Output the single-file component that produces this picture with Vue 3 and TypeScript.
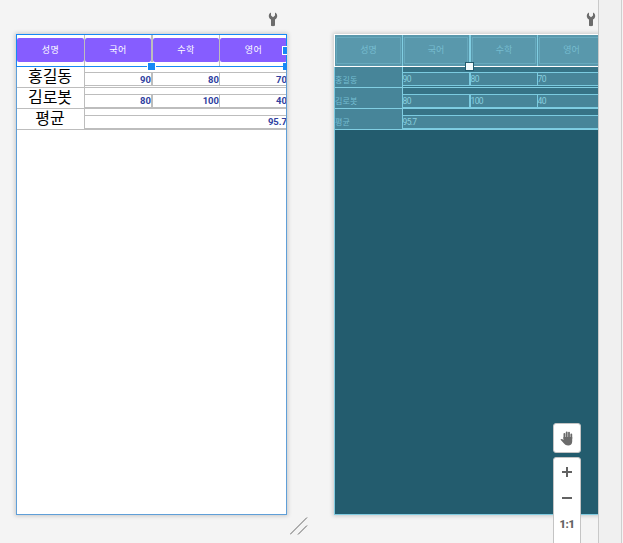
<script setup lang="ts">
interface ScoreRow { label: string; values: string[] }

const subjects: string[] = ['성명', '국어', '수학', '영어']
const rows: ScoreRow[] = [
  { label: '홍길동', values: ['90', '80', '70'] },
  { label: '김로봇', values: ['80', '100', '40'] },
  { label: '평균', values: ['95.7'] },
]
const surfaces: string[] = ['design', 'blueprint']
</script>

<template>
  <div class="editor">
    <main class="canvas">
      <section v-for="kind in surfaces" :key="kind" class="surface" :class="kind">
        <div class="tools">
          <svg class="wrench" viewBox="0 0 10 15" width="10" height="15">
            <path d="M3 .4v3.200L5 5.200l2-1.600V.4C8.700 1.200 9.300 2.600 9.200 4.200 9.100 5.800 8.200 6.800 7 7.400v5.600c0 .8-.8 1.200-2 1.200s-2-.4-2-1.200V7.400C1.800 6.800.9 5.800.8 4.200.7 2.600 1.300 1.200 3 .4z" fill="#6c6c6c" />
          </svg>
        </div>
        <div class="phone">
          <div class="row header">
            <div v-for="subject in subjects" :key="subject" class="head-cell">
              <span class="button">{{ subject }}</span>
            </div>
          </div>
          <div v-for="(row, i) in rows" :key="row.label" class="row body" :class="'r' + i">
            <div class="name">{{ row.label }}</div>
            <div v-for="(value, j) in row.values" :key="j" class="value">{{ value }}</div>
          </div>
          <div class="frame"></div>
          <div class="selection"></div>
          <i class="handle bottom"></i>
          <i class="handle corner"></i>
          <i class="handle side"></i>
        </div>
      </section>
      <svg class="grip" viewBox="0 0 18 18" width="18" height="18">
        <path d="M0 17.500L17 .5M8 17.500l9-9" stroke="#666" fill="none" />
      </svg>
      <div class="controls">
        <button class="pan">
          <svg viewBox="0 0 14 15" width="14" height="15">
            <path d="M4.400 7.500V2.800M6.700 7V1.300M9 7V1.600M11.300 7.500V3.300" stroke="#6b6b6b" stroke-width="1.800" stroke-linecap="round" />
            <path d="M3.500 6h8.700v4.500c0 2.500-1.600 4-4 4-2 0-3.200-.8-4.200-2L.4 8.600c.8-1 1.800-.9 3.100.3z" fill="#6b6b6b" />
          </svg>
        </button>
        <div class="zoom">
          <svg viewBox="0 0 10 10" width="10" height="10"><path d="M5 0v10M0 5h10" stroke="#626262" stroke-width="2" /></svg>
          <svg viewBox="0 0 10 10" width="10" height="10"><path d="M0 5h10" stroke="#626262" stroke-width="2" /></svg>
          <span class="ratio">1:1</span>
        </div>
      </div>
    </main>
    <aside class="rail"></aside>
  </div>
</template>

<style>
body { background: #f4f4f4; overflow: hidden; }
</style>

<style scoped>
* { box-sizing: border-box; }
.editor { display: flex; width: 623px; height: 543px; overflow: hidden; background: #f4f4f4; font-family: Roboto, "Noto Sans CJK KR", sans-serif; }
.canvas { position: relative; flex: none; width: 598px; height: 543px; padding-left: 16px; display: flex; gap: 47px; overflow: hidden; }
.rail { flex: none; width: 25px; background: #f0f0f0; border-left: 1px solid #c9c9c9; box-shadow: inset -1px 0 #f4f4f4, inset -2px 0 #cecece; }
.surface { flex: none; width: 271px; }
.tools { height: 34px; padding: 12px 9px 0 0; display: flex; justify-content: flex-end; }
.phone { position: relative; height: 481px; background: #fff; box-shadow: 0 0 4px 1px #c8c8c8; }
.row { display: grid; grid-template-columns: 68px 67px 68px 68px; }
.header { height: 33px; }
.head-cell { padding: 4px 0; border-left: 1px solid #bdbdbd; display: flex; }
.head-cell:nth-child(3) { border-left-width: 2px; }
.button { flex: 1; height: 24px; border-radius: 2px; background: #865dff; color: #fff; font-size: 9px; line-height: 24px; letter-spacing: .4px; text-align: center; }
.body { height: 21px; border-bottom: 1px solid #bdbdbd; }
.name { height: 20px; font-size: 16px; line-height: 20px; color: #000; text-align: center; white-space: nowrap; box-shadow: 1px 0 #bdbdbd; }
.value { margin-top: 5px; height: 14px; border: solid #bdbdbd; border-width: 1px 0 1px 1px; color: #303f9f; font-size: 9.500px; line-height: 13px; letter-spacing: 0; font-weight: 700; text-align: right; white-space: nowrap; }
.r0 .value:nth-child(3), .r1 .value:nth-child(3) { border-left-width: 2px; }
.r1 .value, .r2 .value { margin-top: 6px; line-height: 12px; }
.r2 .value { grid-column: 2 / 5; }
.frame { position: absolute; inset: 0; border: 1px solid #5f9fd8; }
.selection { position: absolute; inset: 0 0 auto; height: 33px; border: 1px solid #1688f5; }
.handle { position: absolute; width: 7px; height: 7px; background: #1688f5; outline: 1px solid #fff; }
.bottom { left: 132px; top: 29px; }
.corner { left: 267px; top: 29px; width: 4px; outline: 0; }
.side { left: 266px; top: 12px; width: 5px; height: 9px; outline: 0; border: 1px solid #fff; border-right: 0; }

.blueprint .phone { background: #235c6e; }
.blueprint .header { background: #5998ac; }
.blueprint .head-cell { padding: 3px 1px; border-color: #81cee2; }
.blueprint .button { height: 27px; border: 1px solid #67a9bd; border-radius: 0; background: transparent; color: #77bdd0; line-height: 25px; letter-spacing: 0; }
.blueprint .body { background: #367386; border-color: #81cee2; }
.blueprint .name { background: #478599; color: #75bdd1; font-size: 8px; letter-spacing: .2px; line-height: 27px; text-align: left; padding-left: 1px; box-shadow: 1px 0 #81cee2; }
.blueprint .value { background: #478599; border-color: #7bcbe0; color: #88cfdf; font-size: 8.500px; line-height: 13px; font-weight: 400; letter-spacing: -.65px; text-align: left; text-indent: -.5px; }
.blueprint .frame { border-color: #81cbe0; }
.blueprint .selection { border-color: #fff; }
.blueprint .bottom { background: #f2fafc; outline-color: #235c6e; }
.blueprint .corner, .blueprint .side { display: none; }

.grip { position: absolute; left: 290px; top: 517px; }
.controls { position: absolute; left: 553px; top: 423px; width: 28px; display: grid; gap: 4px; }
.pan, .zoom { width: 28px; background: #fff; border: 1px solid #c4c4c4; border-radius: 3px; display: flex; align-items: center; }
.pan { height: 30px; padding: 0; justify-content: center; }
.zoom { height: 96px; flex-direction: column; gap: 16px; padding-top: 9px; }
.ratio { font-size: 11px; line-height: 12px; font-weight: 900; letter-spacing: -.3px; color: #626262; }
</style>
